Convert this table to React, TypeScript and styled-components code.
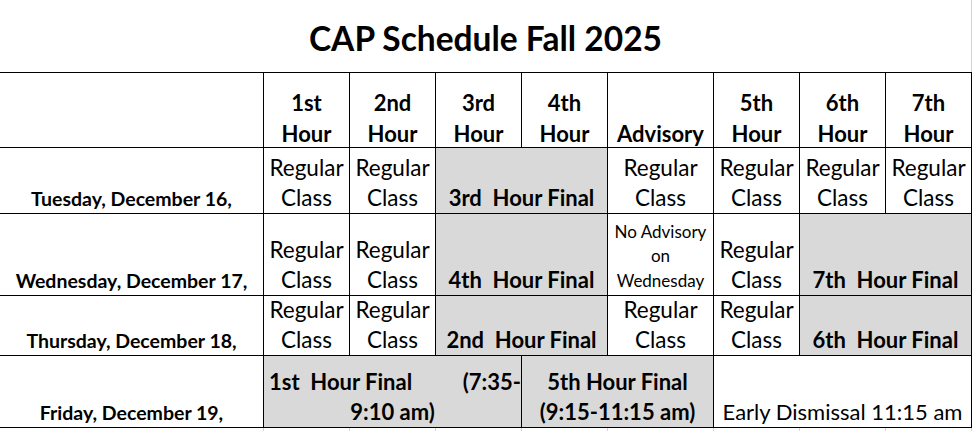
import React from 'react';
import styled, { createGlobalStyle, css } from 'styled-components';

const ink = '#000000';
const shade = '#d9d9d9';
const faint = '#d4d4d4';
const sheetFont = `Lato, 'Noto Sans', sans-serif`;

const GlobalStyle = createGlobalStyle`
  html, body {
    margin: 0;
    padding: 0;
    background: #ffffff;
  }
  body {
    font-family: ${sheetFont};
    color: ${ink};
  }
`;

const Sheet = styled.div`
  width: 974px;
  height: 431px;
  overflow: hidden;
  background: #ffffff;
`;

const Title = styled.h1`
  box-sizing: border-box;
  width: 972px;
  height: 72px;
  margin: 0;
  display: flex;
  align-items: center;
  justify-content: center;
  padding-top: 4px;
  border-right: 1px solid ${faint};
  font-family: ${sheetFont};
  font-size: 33.5px;
  font-weight: 700;
`;

const Grid = styled.div`
  display: grid;
  width: 972px;
  grid-template-columns: 264px repeat(4, 86px) 106px repeat(3, 86px);
  grid-template-rows: 75px 66px 82px 60px 72px;
  border-top: 1px solid ${ink};
`;

const Cell = styled.div<{ $span?: number; $gray?: boolean }>`
  box-sizing: border-box;
  grid-column: span ${p => p.$span ?? 1};
  display: flex;
  flex-direction: column;
  justify-content: flex-end;
  align-items: center;
  text-align: center;
  border-right: 1px solid ${ink};
  border-bottom: 1px solid ${ink};
  background: ${p => (p.$gray ? shade : 'transparent')};
  font-size: 22.5px;
  line-height: 30px;
  white-space: pre;
  overflow: hidden;
`;

const boldText = css`
  font-weight: 700;
`;

const HeadCell = styled(Cell)`
  ${boldText};
  font-size: 22px;
  line-height: 31px;
`;

// Excel sits the header text a touch lower than the row's line box
const HeadLabel = styled.span`
  margin-bottom: -2px;
`;

const DayCell = styled(Cell)`
  ${boldText};
  font-size: 19.5px;
  line-height: 28px;
`;

const FinalCell = styled(Cell)`
  ${boldText};
  font-size: 22px;
`;

const NoteCell = styled(Cell)`
  font-size: 17px;
  line-height: 24.5px;
  padding-bottom: 2px;
`;

const DismissCell = styled(Cell)`
  font-size: 22px;
`;

const SplitLine = styled.div`
  align-self: stretch;
  display: flex;
  justify-content: space-between;
  padding-left: 5px;
`;

const FaintRow = styled.div`
  display: grid;
  width: 972px;
  height: 4px;
  grid-template-columns: 264px repeat(4, 86px) 106px repeat(3, 86px);
`;

const FaintCell = styled.div`
  box-sizing: border-box;
  border-right: 1px solid ${faint};
`;

const hours = ['1st', '2nd', '3rd', '4th', null, '5th', '6th', '7th'];

const Regular = ({ gray }: { gray?: boolean }) => <Cell $gray={gray}>{'Regular\nClass'}</Cell>;

const App = () => (
  <Sheet>
    <GlobalStyle />
    <Title>CAP Schedule Fall 2025</Title>
    <Grid>
      <HeadCell />
      {hours.map((h, i) => (
        <HeadCell key={i}>
          <HeadLabel>{h ? `${h}\nHour` : 'Advisory'}</HeadLabel>
        </HeadCell>
      ))}

      <DayCell>Tuesday, December 16,</DayCell>
      <Regular />
      <Regular />
      <FinalCell $span={2} $gray>3rd  Hour Final</FinalCell>
      <Regular />
      <Regular />
      <Regular />
      <Regular />

      <DayCell>Wednesday, December 17,</DayCell>
      <Regular />
      <Regular />
      <FinalCell $span={2} $gray>4th  Hour Final</FinalCell>
      <NoteCell>{'No Advisory\non\nWednesday'}</NoteCell>
      <Regular />
      <FinalCell $span={2} $gray>7th  Hour Final</FinalCell>

      <DayCell>Thursday, December 18,</DayCell>
      <Regular />
      <Regular />
      <FinalCell $span={2} $gray>2nd  Hour Final</FinalCell>
      <Regular />
      <Regular />
      <FinalCell $span={2} $gray>6th  Hour Final</FinalCell>

      <DayCell>Friday, December 19,</DayCell>
      <FinalCell $span={3} $gray>
        <SplitLine>
          <span>1st  Hour Final</span>
          <span>(7:35-</span>
        </SplitLine>
        <span>9:10 am)</span>
      </FinalCell>
      <FinalCell $span={2} $gray>{'5th Hour Final\n(9:15-11:15 am)'}</FinalCell>
      <DismissCell $span={3}>Early Dismissal 11:15 am</DismissCell>
    </Grid>
    <FaintRow>
      {Array.from({ length: 9 }, (_, i) => <FaintCell key={i} />)}
    </FaintRow>
  </Sheet>
);

export default App;
